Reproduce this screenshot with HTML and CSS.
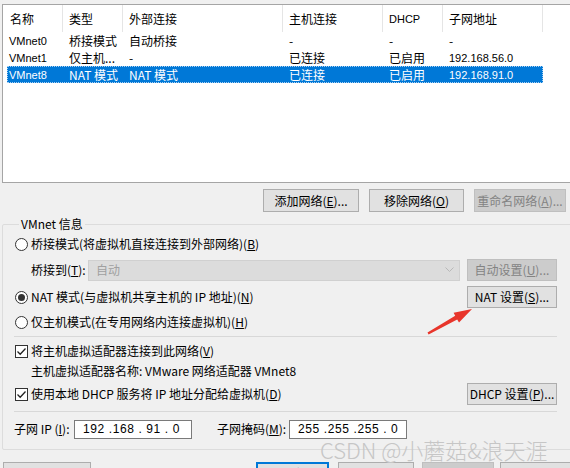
FILE: index.html
```html
<!DOCTYPE html>
<html lang="zh">
<head>
<meta charset="utf-8">
<title>虚拟网络编辑器</title>
<link rel="stylesheet" href="styles.css">
</head>
<body>
<div class="list">
  <div class="lhead">
    <div class="c w1 first">名称</div>
    <div class="c w2">类型</div>
    <div class="c w3">外部连接</div>
    <div class="c w4">主机连接</div>
    <div class="c w5 en">DHCP</div>
    <div class="c w6">子网地址</div>
  </div>
  <div class="lrow">
    <div class="c w1r en">VMnet0</div>
    <div class="c w2">桥接模式</div>
    <div class="c w3">自动桥接</div>
    <div class="c w4">-</div>
    <div class="c w5">-</div>
    <div class="c w6">-</div>
  </div>
  <div class="lrow">
    <div class="c w1r en">VMnet1</div>
    <div class="c w2">仅主机...</div>
    <div class="c w3">-</div>
    <div class="c w4">已连接</div>
    <div class="c w5">已启用</div>
    <div class="c w6 en">192.168.56.0</div>
  </div>
  <div class="lrow sel">
    <div class="c w1r en">VMnet8</div>
    <div class="c w2">NAT 模式</div>
    <div class="c w3">NAT 模式</div>
    <div class="c w4">已连接</div>
    <div class="c w5">已启用</div>
    <div class="c w6 en">192.168.91.0</div>
  </div>
</div>

<div class="btnrow">
  <div class="btn b-add">添加网络(<u>E</u>)...</div>
  <div class="btn b-del">移除网络(<u>O</u>)</div>
  <div class="btn b-ren dis">重命名网络(<u>A</u>)...</div>
</div>

<fieldset class="group">
  <legend>VMnet 信息</legend>
  <div class="row r1">
    <span class="radio"></span><span class="lbl">桥接模式(将虚拟机直接连接到外部网络)(<u>B</u>)</span>
  </div>
  <div class="row r2">
    <span class="bridge-lbl">桥接到(<u>T</u>):</span>
    <div class="combo"><span>自动</span>
      <svg class="chev" width="9" height="6" viewBox="0 0 9 6"><path d="M0.5 0.5 L4.5 4.5 L8.5 0.5" fill="none" stroke="#b8b8b8" stroke-width="1"/></svg>
    </div>
    <div class="btn side dis">自动设置(<u>U</u>)...</div>
  </div>
  <div class="row r3">
    <span class="radio on"></span><span class="lbl">NAT 模式(与虚拟机共享主机的 IP 地址)(<u>N</u>)</span>
    <div class="btn side push">NAT 设置(<u>S</u>)...</div>
  </div>
  <div class="row r4">
    <span class="radio"></span><span class="lbl">仅主机模式(在专用网络内连接虚拟机)(<u>H</u>)</span>
  </div>
  <div class="sep"></div>
  <div class="row r5">
    <span class="check"><svg width="11" height="11" viewBox="0 0 11 11"><path d="M1.5 5.5 L4.2 8.2 L9.5 2.5" fill="none" stroke="#222" stroke-width="1.3"/></svg></span><span class="lbl">将主机虚拟适配器连接到此网络(<u>V</u>)</span>
  </div>
  <div class="row r6">
    <span class="adapter">主机虚拟适配器名称: VMware 网络适配器 VMnet8</span>
  </div>
  <div class="row r7">
    <span class="check"><svg width="11" height="11" viewBox="0 0 11 11"><path d="M1.5 5.5 L4.2 8.2 L9.5 2.5" fill="none" stroke="#222" stroke-width="1.3"/></svg></span><span class="lbl">使用本地 DHCP 服务将 IP 地址分配给虚拟机(<u>D</u>)</span>
    <div class="btn side push">DHCP 设置(<u>P</u>)...</div>
  </div>
  <div class="sep sep2"></div>
  <div class="row r8">
    <span class="ip-lbl">子网 IP (<u>I</u>):</span>
    <div class="ipbox">192 .168 . 91 . 0</div>
    <span class="mask-lbl">子网掩码(<u>M</u>):</span>
    <div class="ipbox">255 .255 .255 . 0</div>
  </div>
</fieldset>

<div class="bottom">
  <div class="btn bb b1">还原默认设置(<u>R</u>)</div>
  <div class="btn bb b2 focus">确定</div>
  <div class="btn bb b3">取消</div>
  <div class="btn bb b4 dis">应用(<u>A</u>)</div>
  <div class="btn bb b5">帮助</div>
</div>

<svg class="arrow" width="60" height="40" viewBox="0 0 60 40">
  <polygon points="7.5,32.6 35.2,15.8 33.6,12.8 52,9 39,22.4 37.2,19.4 8.6,34.4" fill="#e8352b"/>
</svg>

<div class="wm">CSDN @小蘑菇&amp;浪天涯</div>
</body>
</html>
```

FILE: styles.css
```css
* { box-sizing: border-box; }
html, body { margin: 0; padding: 0; }
body {
  width: 570px;
  height: 468px;
  overflow: hidden;
  position: relative;
  background: #f0f0f0;
  color: #000;
  font-family: "Noto Sans CJK SC", "Microsoft YaHei", sans-serif;
  font-size: 12px;
  line-height: 16px;
}
u { text-decoration: underline; text-underline-offset: 1px; }
.en { font-family: "Liberation Sans", "Noto Sans CJK SC", sans-serif; font-size: 11px; }

/* list view */
.list {
  margin: 4px 0 0 2px;
  width: 620px;
  height: 179px;
  background: #fff;
  border: 1px solid #a5a5a5;
}
.lhead { display: flex; height: 27px; }
.lhead .c { border-right: 1px solid #e5e5e5; }
.c {
  display: flex;
  align-items: center;
  padding-left: 6px;
  white-space: nowrap;
  overflow: hidden;
}
.w1 { width: 60px; }
.w1.first { padding-left: 7px; }
.w1r { width: 56px; padding-left: 2px; }
.w2 { width: 60px; }
.w3 { width: 160px; }
.w4 { width: 100px; }
.w5 { width: 60px; }
.w6 { width: 100px; }
.lrow { display: flex; height: 17px; margin-left: 4px; width: 536px; }
.lrow .c { height: 17px; }
.sel {
  background: #0078d7;
  color: #fff;
  outline: 1px dotted #a8cff2;
  outline-offset: -1px;
}

/* buttons */
.btn {
  height: 23px;
  border: 1px solid #adadad;
  background: #e1e1e1;
  display: flex;
  align-items: center;
  justify-content: center;
  white-space: nowrap;
}
.btn.dis { background: #cccccc; border-color: #bfbfbf; color: #838383; }
.btnrow {
  display: flex;
  justify-content: flex-end;
  gap: 10px;
  margin-top: 6px;
  padding-right: 4px;
}
.b-add { width: 96px; }
.b-del { width: 95px; }
.b-ren { width: 92px; }

/* group box */
.group {
  margin: 4px 0 0 2px;
  padding: 0 22px 3px 11px;
  width: 578px;
  border: 1px solid #dcdcdc;
  border-radius: 2px;
  min-width: 0;
}
.group legend {
  margin-left: 5px;
  padding: 0 2px;
  line-height: 16px;
  font-size: 12px;
}
.row { display: flex; align-items: center; }
.r1 { height: 24px; }
.r2 { height: 28px; }
.r3 { height: 26px; }
.r4 { height: 24px; }
.r5 { height: 24px; }
.r6 { height: 16px; }
.r7 { height: 30px; }
.r8 { height: 34px; }
.sep { height: 1px; background: #d8d8d8; margin: 2px 0; }
.sep2 { margin: 2px 0 0; }

.radio {
  width: 13px; height: 13px;
  border: 1px solid #333;
  border-radius: 50%;
  background: #fff;
  margin-left: 1px;
  display: flex;
  align-items: center;
  justify-content: center;
  flex: none;
}
.radio.on::after {
  content: "";
  width: 7px; height: 7px;
  border-radius: 50%;
  background: #333;
}
.check {
  width: 13px; height: 13px;
  border: 1px solid #333;
  background: #fff;
  margin-left: 1px;
  display: flex;
  align-items: center;
  justify-content: center;
  flex: none;
}
.lbl { margin-left: 3px; white-space: nowrap; }
.bridge-lbl { margin-left: 17px; width: 57px; white-space: nowrap; }
.combo {
  flex: 1;
  height: 21px;
  background: #dcdcdc;
  border: 1px solid #d0d0d0;
  color: #a0a0a0;
  display: flex;
  align-items: center;
  justify-content: space-between;
  padding: 0 5px 0 7px;
  margin-right: 7px;
}
.side { width: 90px; height: 22px; flex: none; }
.push { margin-left: auto; }
.adapter { margin-left: 17px; white-space: nowrap; }

.ip-lbl { width: 60px; white-space: nowrap; }
.mask-lbl { margin-left: 25px; width: 72px; white-space: nowrap; }
.ipbox {
  width: 118px;
  height: 19px;
  background: #fff;
  border: 1px solid #7a7a7a;
  display: flex;
  align-items: center;
  padding-left: 8px;
  font-family: "Liberation Sans", sans-serif;
  font-size: 12px;
  letter-spacing: 0.6px;
  white-space: pre;
}

/* bottom buttons */
.bottom {
  display: flex;
  margin-top: 12px;
  padding-left: 3px;
}
.bb { height: 23px; flex: none; }
.b1 { width: 88px; }
.b2 { width: 73px; margin-left: 165px; }
.b3 { width: 76px; margin-left: 9px; }
.b4 { width: 72px; margin-left: 8px; }
.b5 { width: 72px; margin-left: 6px; }
.focus { border: 2px solid #0078d7; }

/* overlays */
.arrow { position: absolute; left: 420px; top: 300px; }
.wm {
  position: absolute;
  left: 320px;
  top: 436px;
  font-size: 22px;
  line-height: 26px;
  font-weight: 300;
  color: #c6c6c6;
  white-space: nowrap;
  font-family: "Noto Sans CJK SC", sans-serif;
}
```
